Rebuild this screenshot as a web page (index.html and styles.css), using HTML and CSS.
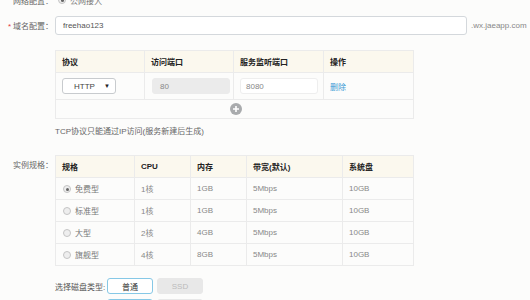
FILE: index.html
```html
<!DOCTYPE html>
<html lang="zh">
<head>
    <meta charset="UTF-8">
    <title>应用配置</title>
    <link rel="stylesheet" href="styles.css">
</head>
<body>
    <div class="form">
        <div class="row row-net">
            <label class="label">网络配置：</label>
            <span class="radio checked"></span>
            <span class="opt">公网接入</span>
        </div>

        <div class="row row-domain">
            <label class="label"><i class="req">*</i>域名配置：</label>
            <input class="text-input domain" type="text" value="freehao123">
            <span class="suffix">.wx.jaeapp.com</span>
        </div>

        <div class="row row-ports">
            <span class="label"></span>
            <div>
                <table class="grid ports">
                    <tr class="head">
                        <th class="c1">协议</th>
                        <th class="c2">访问端口</th>
                        <th class="c3">服务监听端口</th>
                        <th class="c4">操作</th>
                    </tr>
                    <tr class="port-row">
                        <td>
                            <div class="select"><span>HTTP</span><span class="arrow">▼</span></div>
                        </td>
                        <td><div class="box disabled">80</div></td>
                        <td><div class="box">8080</div></td>
                        <td><a class="link" href="#">删除</a></td>
                    </tr>
                    <tr class="add-row">
                        <td colspan="4">
                            <svg class="plus" width="12" height="12" viewBox="0 0 12 12">
                                <circle cx="6" cy="6" r="6" fill="#a9abad"/>
                                <path d="M6 3v6M3 6h6" stroke="#fff" stroke-width="1.6"/>
                            </svg>
                        </td>
                    </tr>
                </table>
                <p class="hint">TCP协议只能通过IP访问(服务新建后生成)</p>
            </div>
        </div>

        <div class="row row-spec">
            <label class="label">实例规格：</label>
            <table class="grid specs">
                <tr class="head">
                    <th class="s1">规格</th>
                    <th class="s2">CPU</th>
                    <th class="s3">内存</th>
                    <th class="s4">带宽(默认)</th>
                    <th class="s5">系统盘</th>
                </tr>
                <tr>
                    <td><span class="radio checked"></span>免费型</td>
                    <td>1核</td><td>1GB</td><td>5Mbps</td><td>10GB</td>
                </tr>
                <tr>
                    <td><span class="radio"></span>标准型</td>
                    <td>1核</td><td>1GB</td><td>5Mbps</td><td>10GB</td>
                </tr>
                <tr>
                    <td><span class="radio"></span>大型</td>
                    <td>2核</td><td>4GB</td><td>5Mbps</td><td>10GB</td>
                </tr>
                <tr>
                    <td><span class="radio"></span>旗舰型</td>
                    <td>4核</td><td>8GB</td><td>5Mbps</td><td>10GB</td>
                </tr>
            </table>
        </div>

        <div class="row row-disk">
            <span class="label"></span>
            <span class="disk-label">选择磁盘类型:</span>
            <button class="btn active">普通</button>
            <button class="btn off">SSD</button>
        </div>
        <div class="row row-disk2">
            <span class="label"></span>
            <span class="disk-label"></span>
            <button class="btn active">普通</button>
            <button class="btn off">SSD</button>
        </div>
    </div>
</body>
</html>
```

FILE: styles.css
```css
body {
    margin: 0;
    background-color: #fcfcfb;
    font-family: "Liberation Sans", "Noto Sans CJK SC", sans-serif;
    font-size: 8px;
    color: #666;
    overflow: hidden;
}
.form {
    margin-top: -9px;
}
.row {
    display: flex;
    align-items: center;
}
.label {
    width: 53px;
    margin-right: 2px;
    text-align: right;
    color: #666;
    flex-shrink: 0;
}
.req {
    font-style: normal;
    color: #e4393c;
    margin-right: 2px;
}
.row-net {
    height: 18px;
}
.row-net .radio {
    margin-left: 3px;
    margin-right: 4px;
}
.opt {
    color: #777;
}
.row-domain {
    margin-top: 7px;
}
.text-input {
    box-sizing: border-box;
    height: 19px;
    border: 1px solid #d4d8dc;
    border-radius: 3px;
    background: #fff;
    font: inherit;
    color: #555;
    padding: 0 7px;
    outline: none;
}
.domain {
    width: 412px;
}
.suffix {
    margin-left: 4px;
    color: #888;
}
.row-ports {
    margin-top: 15px;
    align-items: flex-start;
}
.grid {
    border-collapse: collapse;
    table-layout: fixed;
    background: #fcfcfb;
}
.grid th,
.grid td {
    box-sizing: border-box;
    border: 1px solid #ebebeb;
    padding: 0 0 0 6px;
    text-align: left;
    white-space: nowrap;
}
.grid .head th {
    height: 22px;
    background: #fbf8ee;
    color: #222;
    font-weight: bold;
}
.ports {
    width: 358px;
}
.c1 { width: 89px; }
.c2 { width: 89px; }
.c3 { width: 90px; }
.c4 { width: 90px; }
.port-row td {
    height: 27px;
}
.select {
    box-sizing: border-box;
    width: 54px;
    height: 16px;
    border: 1px solid #c8cbce;
    border-radius: 3px;
    background: #fff;
    display: flex;
    align-items: center;
    justify-content: space-between;
    padding: 0 5px 0 11px;
    color: #444;
}
.arrow {
    font-size: 6px;
    color: #222;
}
.box {
    box-sizing: border-box;
    width: 78px;
    height: 16px;
    border: 1px solid #eeeeee;
    border-radius: 3px;
    background: #fff;
    display: flex;
    align-items: center;
    padding-left: 5px;
    color: #888;
}
.box.disabled {
    background: #ebebeb;
    border-color: #ebebeb;
    margin-left: 1px;
    padding-left: 7px;
}
.link {
    color: #3a9bd5;
    text-decoration: none;
}
.add-row td {
    height: 19px;
    padding: 0;
    text-align: center;
}
.plus {
    display: block;
    margin: 0 auto;
    position: relative;
    left: 1px;
}
.hint {
    margin: 5px 0 0;
    line-height: 16px;
    color: #666;
}
.row-spec {
    margin-top: 15px;
    align-items: flex-start;
}
.row-spec .label {
    line-height: 22px;
}
.specs {
    width: 358px;
}
.s1 { width: 79px; }
.s2 { width: 56px; }
.s3 { width: 56px; }
.s4 { width: 96px; }
.s5 { width: 71px; }
.specs td {
    height: 22px;
    color: #888;
}
.specs td:first-child {
    padding-left: 7px;
    color: #777;
}
.radio {
    display: inline-block;
    box-sizing: border-box;
    width: 8px;
    height: 8px;
    border: 1px solid #c4c4c4;
    border-radius: 50%;
    background: #eeeeee;
    vertical-align: -1px;
    margin-right: 4px;
    position: relative;
}
.radio.checked::after {
    content: '';
    position: absolute;
    left: 1.5px;
    top: 1.5px;
    width: 3px;
    height: 3px;
    border-radius: 50%;
    background: #666;
}
.row-disk {
    margin-top: 12px;
}
.disk-label {
    width: 52px;
    color: #555;
}
.btn {
    box-sizing: border-box;
    width: 46px;
    height: 16px;
    border-radius: 3px;
    font: inherit;
    padding: 0;
    margin-right: 4px;
}
.btn.active {
    border: 1px solid #86c8e6;
    background: #fff;
    color: #333;
}
.btn.off {
    border: 1px solid #e8e8e8;
    background: #e8e8e8;
    color: #bbb;
}
.row-disk2 {
    margin-top: 5px;
}
```
